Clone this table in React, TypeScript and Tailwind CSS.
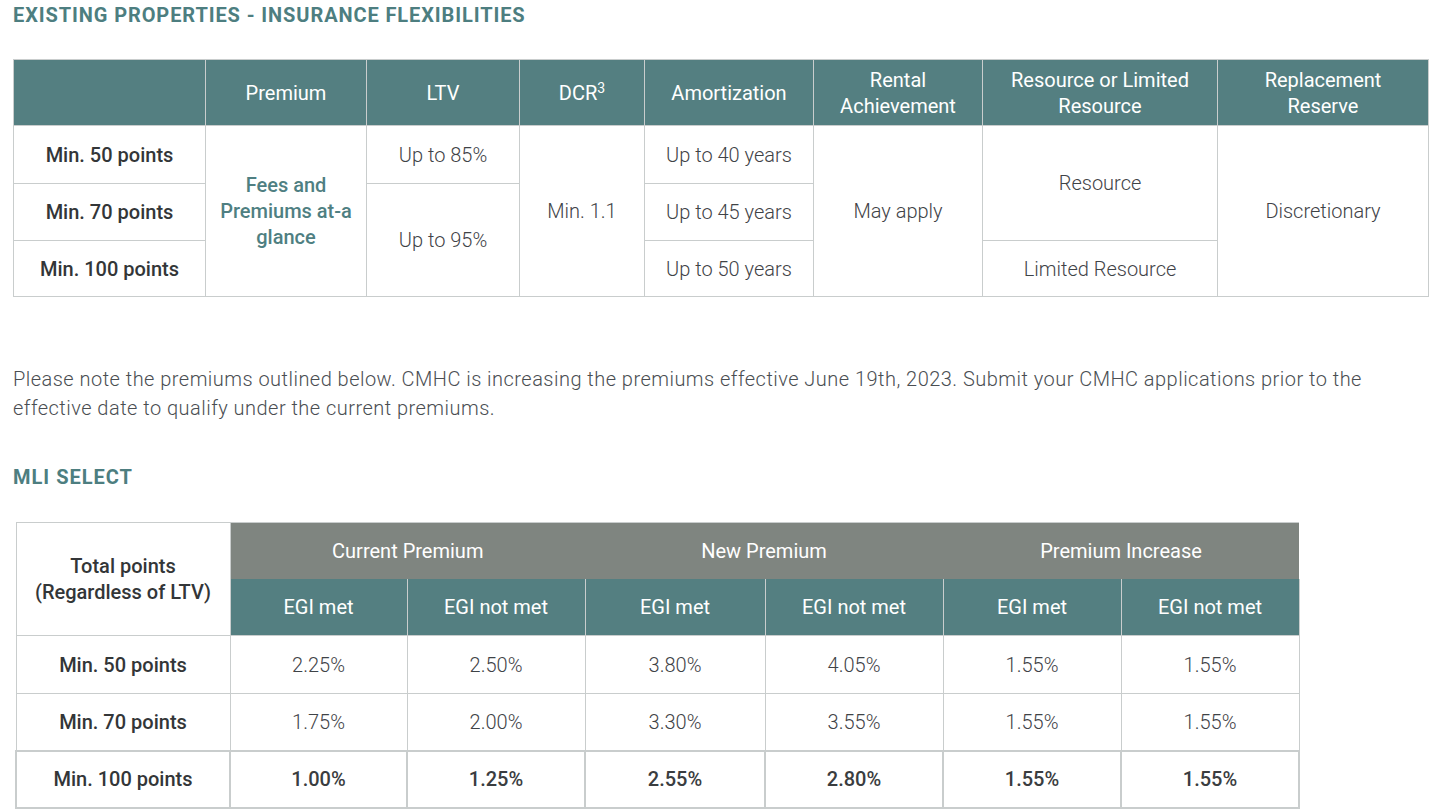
import React from "react";

const teal = "bg-[#547f81]";
const bd = "border border-[#c9cdcd]";

function Th1({ children }: { children?: React.ReactNode }) {
  return (
    <th className={`${teal} ${bd} text-white font-normal text-[20px] leading-[26px] text-center align-middle px-2`}>
      {children}
    </th>
  );
}

function Td({ children, rowSpan, kind = "val", className = "" }: { children?: React.ReactNode; rowSpan?: number; kind?: "val" | "label" | "link" | "bold"; className?: string }) {
  const k =
    kind === "label"
      ? "font-medium text-[#333638]"
      : kind === "link"
      ? "font-medium text-[#4f7f82]"
      : kind === "bold"
      ? "font-medium text-[#3a3d40]"
      : "font-light text-[#3f4347]";
  return (
    <td rowSpan={rowSpan} className={`${bd} ${k} text-[20px] leading-[26px] text-center align-middle px-2 ${className}`}>
      {children}
    </td>
  );
}

export default function App() {
  const rows2 = [
    ["Min. 50 points", "2.25%", "2.50%", "3.80%", "4.05%", "1.55%", "1.55%"],
    ["Min. 70 points", "1.75%", "2.00%", "3.30%", "3.55%", "1.55%", "1.55%"],
    ["Min. 100 points", "1.00%", "1.25%", "2.55%", "2.80%", "1.55%", "1.55%"],
  ];
  return (
    <div className="w-[1446px] h-[809px] overflow-hidden bg-white font-['Roboto',sans-serif]">
      <div className="pl-[13px] flex flex-col items-start">
        <h2 className="mt-[1px] text-[20px] leading-[28px] font-bold text-[#4d7e80] tracking-[0.9px]">
          EXISTING PROPERTIES - INSURANCE FLEXIBILITIES
        </h2>

        <table className="mt-[30px] table-fixed border-collapse w-[1415px]">
          <colgroup>
            <col className="w-[192px]" />
            <col className="w-[161px]" />
            <col className="w-[153px]" />
            <col className="w-[125px]" />
            <col className="w-[169px]" />
            <col className="w-[169px]" />
            <col className="w-[235px]" />
            <col className="w-[211px]" />
          </colgroup>
          <thead>
            <tr className="h-[66px]">
              <Th1 />
              <Th1>Premium</Th1>
              <Th1>LTV</Th1>
              <Th1>
                DCR<sup className="text-[14px]">3</sup>
              </Th1>
              <Th1>Amortization</Th1>
              <Th1>
                Rental
                <br />
                Achievement
              </Th1>
              <Th1>
                Resource or Limited
                <br />
                Resource
              </Th1>
              <Th1>
                Replacement
                <br />
                Reserve
              </Th1>
            </tr>
          </thead>
          <tbody>
            <tr className="h-[58px]">
              <Td kind="label">Min. 50 points</Td>
              <Td kind="link" rowSpan={3}>
                Fees and
                <br />
                Premiums at-a
                <br />
                glance
              </Td>
              <Td>Up to 85%</Td>
              <Td rowSpan={3}>Min. 1.1</Td>
              <Td>Up to 40 years</Td>
              <Td rowSpan={3}>May apply</Td>
              <Td rowSpan={2}>Resource</Td>
              <Td rowSpan={3}>Discretionary</Td>
            </tr>
            <tr className="h-[57px]">
              <Td kind="label">Min. 70 points</Td>
              <Td rowSpan={2}>Up to 95%</Td>
              <Td>Up to 45 years</Td>
            </tr>
            <tr className="h-[56px]">
              <Td kind="label">Min. 100 points</Td>
              <Td>Up to 50 years</Td>
              <Td>Limited Resource</Td>
            </tr>
          </tbody>
        </table>

        <p className="mt-[68px] w-[1400px] text-[20px] leading-[29px] font-light text-[#4a4e52] tracking-[0.47px]">
          Please note the premiums outlined below. CMHC is increasing the premiums effective June 19th, 2023. Submit your CMHC applications prior to the effective date to qualify under the current premiums.
        </p>

        <h3 className="mt-[40px] text-[20px] leading-[28px] font-bold text-[#4d7e80] tracking-[1px]">MLI SELECT</h3>

        <table className="mt-[31px] ml-[2px] table-fixed border-collapse w-[1283px]">
          <colgroup>
            <col className="w-[214px]" />
            <col className="w-[177px]" />
            <col className="w-[178px]" />
            <col className="w-[180px]" />
            <col className="w-[178px]" />
            <col className="w-[178px]" />
            <col className="w-[178px]" />
          </colgroup>
          <thead>
            <tr className="h-[56px]">
              <th rowSpan={2} className={`${bd} bg-white font-medium text-[#333638] text-[20px] leading-[26px] text-center align-middle`}>
                Total points
                <br />
                (Regardless of LTV)
              </th>
              {["Current Premium", "New Premium", "Premium Increase"].map((g) => (
                <th key={g} colSpan={2} className="bg-[#7f8580] border-t border-[#c9cdcd] text-white font-normal text-[20px] leading-[26px] text-center align-middle">
                  {g}
                </th>
              ))}
            </tr>
            <tr className="h-[57px]">
              {["EGI met", "EGI not met", "EGI met", "EGI not met", "EGI met", "EGI not met"].map((s, i) => (
                <th key={i} className={`${teal} border-x border-[#c9cdcd] text-white font-normal text-[20px] leading-[26px] text-center align-middle`}>
                  {s}
                </th>
              ))}
            </tr>
          </thead>
          <tbody>
            {rows2.map((r, ri) => (
              <tr key={ri} className={ri === 0 ? "h-[58px]" : "h-[57px]"}>
                {r.map((c, ci) => (
                  <Td
                    key={ci}
                    kind={ci === 0 ? "label" : ri === 2 ? "bold" : "val"}
                    className={ri === 2 ? "border-2" : ""}
                  >
                    {c}
                  </Td>
                ))}
              </tr>
            ))}
          </tbody>
        </table>
      </div>
    </div>
  );
}
